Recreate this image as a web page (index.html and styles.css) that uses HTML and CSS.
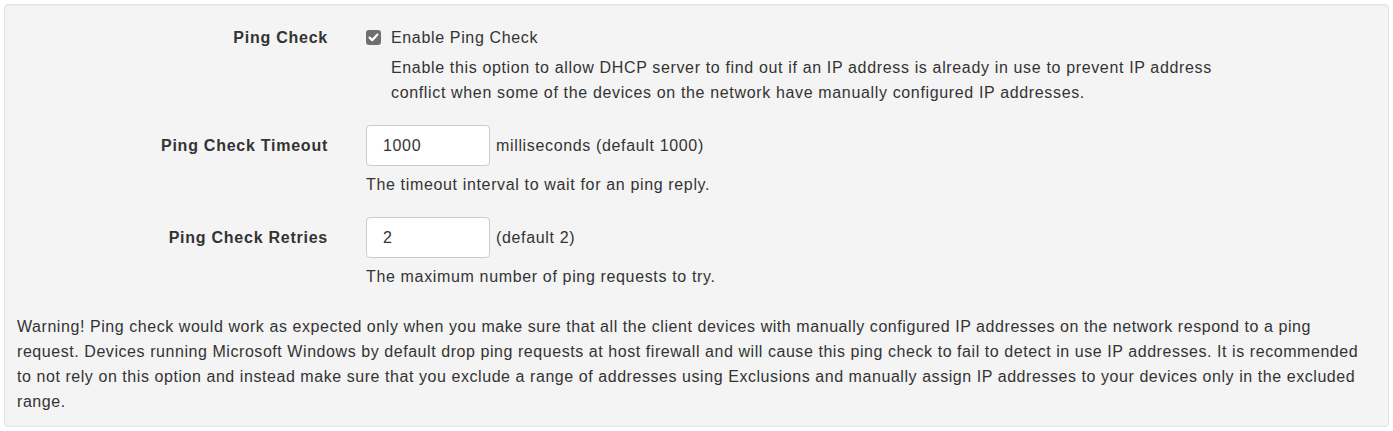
FILE: index.html
```html
<!DOCTYPE html>
<html>
<head>
<meta charset="utf-8">
<link rel="stylesheet" href="styles.css">
</head>
<body>
<div class="well">
  <div class="form-group">
    <div class="label">Ping Check</div>
    <div class="control">
      <label class="checkbox">
        <span class="box"><svg width="15" height="15" viewBox="0 0 15 15"><path d="M3.6 7.6 L6.2 10.2 L11.4 4.6" fill="none" stroke="#fff" stroke-width="2.2" stroke-linecap="round" stroke-linejoin="round"/></svg></span>
        <span>Enable Ping Check</span>
      </label>
      <div class="desc">Enable this option to allow DHCP server to find out if an IP address is already in use to prevent IP address conflict when some of the devices on the network have manually configured IP addresses.</div>
    </div>
  </div>
  <div class="form-group">
    <div class="label label-input">Ping Check Timeout</div>
    <div class="control">
      <div class="input-row">
        <span class="input">1000</span>
        <span>milliseconds (default 1000)</span>
      </div>
      <div class="help">The timeout interval to wait for an ping reply.</div>
    </div>
  </div>
  <div class="form-group">
    <div class="label label-input">Ping Check Retries</div>
    <div class="control">
      <div class="input-row">
        <span class="input">2</span>
        <span>(default 2)</span>
      </div>
      <div class="help">The maximum number of ping requests to try.</div>
    </div>
  </div>
  <p class="warning">Warning! Ping check would work as expected only when you make sure that all the client devices with manually configured IP addresses on the network respond to a ping request. Devices running Microsoft Windows by default drop ping requests at host firewall and will cause this ping check to fail to detect in use IP addresses. It is recommended to not rely on this option and instead make sure that you exclude a range of addresses using Exclusions and manually assign IP addresses to your devices only in the excluded range.</p>
</div>
</body>
</html>
```

FILE: styles.css
```css
html, body {
  margin: 0;
  padding: 0;
  background: #ffffff;
}
body {
  padding: 4px;
  font-family: "Liberation Sans", Arial, sans-serif;
  font-size: 16px;
  line-height: 25px;
  letter-spacing: 0.65px;
  color: #333333;
}
.well {
  background: #f4f4f4;
  border: 1px solid #e3e3e3;
  border-radius: 4px;
  box-shadow: inset 0 1px 1px rgba(0,0,0,0.04);
  padding: 20px 12px 12px 12px;
}
.form-group {
  display: grid;
  grid-template-columns: 311px 1fr;
  column-gap: 38px;
  margin-bottom: 20px;
}
.label {
  font-weight: bold;
  text-align: right;
  letter-spacing: 0.75px;
}
.label-input {
  padding-top: 8px;
}
.checkbox {
  display: flex;
  align-items: center;
  gap: 10px;
}
.box {
  width: 15px;
  height: 15px;
  background: #6f6f6f;
  border-radius: 3px;
  display: flex;
}
.desc {
  margin-top: 5px;
  margin-left: 25px;
  max-width: 840px;
}
.input-row {
  display: flex;
  align-items: center;
  gap: 6px;
}
.input {
  box-sizing: border-box;
  width: 124px;
  height: 41px;
  background: #ffffff;
  border: 1px solid #cccccc;
  border-radius: 4px;
  padding: 7px 12px 7px 16px;
  color: #333333;
}
.help {
  margin-top: 6px;
}
.warning {
  margin: 25px 0 0 0;
  letter-spacing: 0.56px;
}
```
